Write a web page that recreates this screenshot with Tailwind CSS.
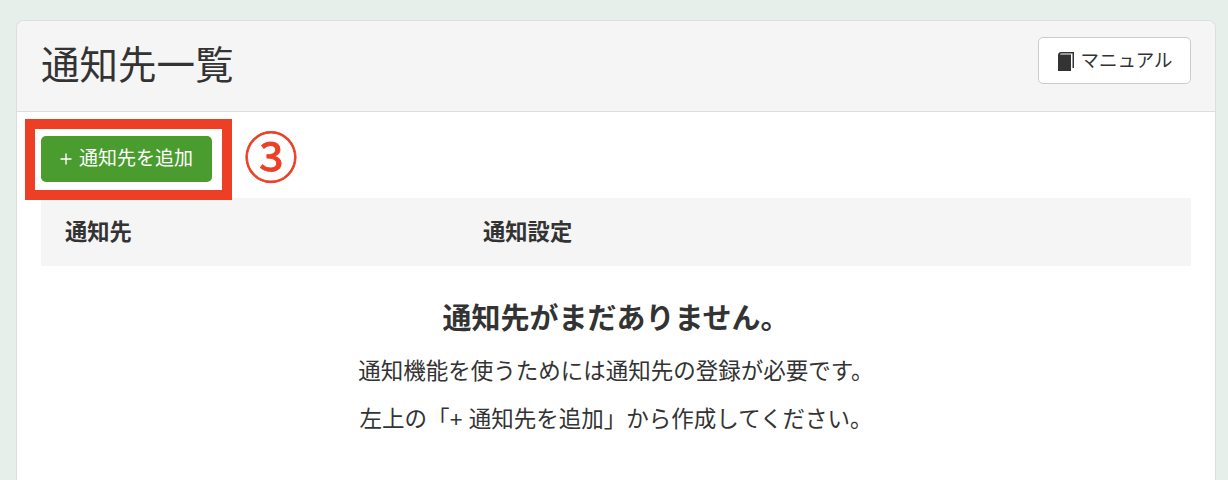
<!DOCTYPE html>
<html lang="ja">
<head>
    <meta charset="UTF-8">
    <title>通知先一覧</title>
    <script src="https://cdn.jsdelivr.net/npm/@tailwindcss/browser@4"></script>
</head>
<body class="h-[480px] overflow-hidden bg-[#e6efe9] pt-[20px] pl-[16px] pr-[12px] text-[#333] font-['Liberation_Sans','Noto_Sans_CJK_JP',sans-serif]">

    <div class="h-[460px] bg-white border border-b-0 border-[#ddd] rounded-t-[8px] overflow-hidden">
        <!-- Header -->
        <div class="h-[91px] flex items-start justify-between pl-[24px] pr-[24px] pt-[16px] bg-[#f5f5f5] border-b border-[#ddd]">
            <h1 class="text-[38.5px] leading-[58px]">通知先一覧</h1>
            <button class="h-[47px] w-[153px] flex items-center justify-center gap-[6px] bg-white border border-[#ccc] rounded-[5px] text-[18.5px]">
                <svg class="w-[18px] h-[20px]" viewBox="0 0 18 20" fill="#333">
                    <path d="M1 4.5 Q1 1 4 1 H17 V17 H15.5 V2.5 H4.5 Q3 2.5 3 3.5 H14 V20 H1 Z"/>
                </svg>
                マニュアル
            </button>
        </div>

        <div class="relative px-[24px] pt-[24px]">
            <button class="w-[171px] h-[46px] flex items-center justify-center gap-[7px] bg-[#4a9c2f] text-white rounded-[5px] text-[19px]">
                <svg class="w-[12px] h-[12px]" viewBox="0 0 12 12" stroke="white" stroke-width="1.4"><path d="M6 0.5 V11.5 M0.5 6 H11.5"/></svg>
                通知先を追加
            </button>

            <!-- Annotation -->
            <div class="absolute left-[8px] top-[7px] w-[207px] h-[81px] border-[10px] border-[#ec3f25]"></div>
            <div class="absolute left-[227px] top-[13px] text-[#ec3f25] text-[54px] leading-[68px] [-webkit-text-stroke:0.8px_#ec3f25]">③</div>

            <div class="mt-[16px] h-[68px] bg-[#f5f5f5] flex items-center px-[24px] pt-[1px] text-[22.3px] font-bold">
                <div class="w-[418px]">通知先</div>
                <div>通知設定</div>
            </div>

            <div class="text-center pt-[31px]">
                <h2 class="text-[29px] font-bold leading-[44px]">通知先がまだありません。</h2>
                <p class="text-[22.5px] leading-[32px] mt-[15px]">通知機能を使うためには通知先の登録が必要です。</p>
                <p class="text-[22.5px] leading-[32px] mt-[16px]">左上の「+ 通知先を追加」から作成してください。</p>
            </div>
        </div>
    </div>

</body>
</html>
